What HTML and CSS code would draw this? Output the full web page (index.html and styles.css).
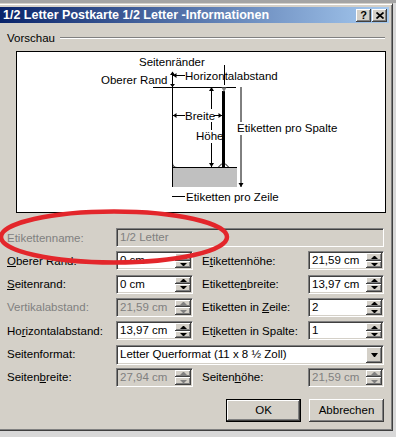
FILE: index.html
```html
<!DOCTYPE html>
<html lang="de">
<head>
  <meta charset="UTF-8">
  <meta name="viewport" content="width=device-width, initial-scale=1.0">
  <title>1/2 Letter Postkarte 1/2 Letter -Informationen</title>
  <link rel="stylesheet" href="styles.css">
</head>
<body>
<div class="screen">
  <div class="dialog">
    <div class="titlebar">
      <span class="title">1/2 Letter Postkarte 1/2 Letter -Informationen</span>
      <span class="tb-btn">?</span>
      <span class="tb-btn tb-close">
        <svg width="8" height="7" viewBox="0 0 8 7"><path d="M0.5 0.5 L7.5 6.5 M7.5 0.5 L0.5 6.5" stroke="#000" stroke-width="1.7" fill="none"/></svg>
      </span>
    </div>

    <div class="content">
      <div class="group"><span>Vorschau</span><span class="etch"></span></div>

      <div class="preview">
        <svg width="368" height="160" viewBox="0 0 368 160">
          <!-- pointers -->
          <line x1="155.5" y1="20" x2="155.5" y2="135" stroke="#000"/>
          <path d="M153 23 L158 23 L155.5 19.5 Z M153 32 L158 32 L155.5 35 Z" fill="#000"/>
          <line x1="156" y1="23.5" x2="168" y2="23.5" stroke="#000"/>
          <path d="M156 23.5 L159.5 21 L159.5 26 Z" fill="#000"/>
          <line x1="136" y1="35.5" x2="219" y2="35.5" stroke="#000"/>
          <line x1="207.5" y1="13" x2="207.5" y2="33" stroke="#000"/>

          <!-- label area -->
          <rect x="156" y="116" width="64" height="19" fill="#c0c0c0"/>
          <line x1="155" y1="115.5" x2="220" y2="115.5" stroke="#000"/>
          <rect x="205" y="39" width="3" height="76" fill="#000"/>
          <path d="M204.5 35.5 L209.5 35.5 L207 40 Z" fill="#808080"/>
          <path d="M201 115.5 L205 111.5 L208 111.5 L212 115.5" stroke="#000" fill="none"/>
          <path d="M155.5 111 Q155.5 115.5 160 115.5" stroke="#000" fill="none"/>

          <!-- Höhe -->
          <line x1="194.5" y1="35" x2="194.5" y2="115" stroke="#000"/>
          <path d="M192 39 L197 39 L194.5 35 Z M192 111 L197 111 L194.5 115 Z" fill="#000"/>

          <!-- Breite -->
          <line x1="156" y1="63.5" x2="168" y2="63.5" stroke="#000"/>
          <line x1="197" y1="63.5" x2="205" y2="63.5" stroke="#000"/>
          <path d="M156 63.5 L159.5 61 L159.5 66 Z M205 63.5 L201.5 61 L201.5 66 Z" fill="#000"/>

          <!-- Etiketten pro Spalte -->
          <line x1="224" y1="35" x2="224" y2="135" stroke="#000"/>
          <path d="M221.5 131 L226.5 131 L224 135 Z" fill="#000"/>

          <!-- Etiketten pro Zeile -->
          <line x1="155" y1="144.5" x2="168" y2="144.5" stroke="#000"/>

          <rect x="168" y="57" width="29" height="13" fill="#fff"/>
          <rect x="178" y="78" width="27" height="13" fill="#fff"/>
          <rect x="219" y="70" width="104" height="13" fill="#fff"/>

          <text x="122" y="14">Seitenränder</text>
          <text x="168" y="27.5">Horizontalabstand</text>
          <line x1="207.5" y1="17" x2="207.5" y2="30" stroke="#000"/>
          <text x="84" y="32">Oberer Rand</text>
          <text x="168" y="67.5">Breite</text>
          <text x="179" y="88">Höhe</text>
          <text x="220" y="80">Etiketten pro Spalte</text>
          <text x="169" y="148.5">Etiketten pro Zeile</text>
        </svg>
      </div>

      <div class="form">
        <label class="lbl off">Etikettenname:</label>
        <div class="field off wide"><span class="val">1/2 Letter</span></div>

        <label class="lbl"><u>O</u>berer Rand:</label>
        <div class="field"><span class="val">0 cm</span><span class="arrows"><span class="up"></span><span class="dn"></span></span></div>
        <label class="lbl lbl2">E<u>t</u>ikettenhöhe:</label>
        <div class="field"><span class="val">21,59 cm</span><span class="arrows"><span class="up"></span><span class="dn"></span></span></div>

        <label class="lbl"><u>S</u>eitenrand:</label>
        <div class="field"><span class="val">0 cm</span><span class="arrows"><span class="up"></span><span class="dn"></span></span></div>
        <label class="lbl lbl2">Etikette<u>n</u>breite:</label>
        <div class="field"><span class="val">13,97 cm</span><span class="arrows"><span class="up"></span><span class="dn"></span></span></div>

        <label class="lbl off">Vertikalabstand:</label>
        <div class="field off"><span class="val">21,59 cm</span><span class="arrows"><span class="up"></span><span class="dn"></span></span></div>
        <label class="lbl lbl2">Etiketten in <u>Z</u>eile:</label>
        <div class="field"><span class="val">2</span><span class="arrows"><span class="up"></span><span class="dn"></span></span></div>

        <label class="lbl">Ho<u>r</u>izontalabstand:</label>
        <div class="field"><span class="val">13,97 cm</span><span class="arrows"><span class="up"></span><span class="dn"></span></span></div>
        <label class="lbl lbl2">Et<u>i</u>ketten in Spalte:</label>
        <div class="field"><span class="val">1</span><span class="arrows"><span class="up"></span><span class="dn"></span></span></div>

        <label class="lbl">Seitenformat:</label>
        <div class="field wide combo"><span class="val">Letter Querformat (11 x 8 ½ Zoll)</span><span class="drop"></span></div>

        <label class="lbl">Seiten<u>b</u>reite:</label>
        <div class="field off"><span class="val">27,94 cm</span><span class="arrows"><span class="up"></span><span class="dn"></span></span></div>
        <label class="lbl lbl2">Seiten<u>h</u>öhe:</label>
        <div class="field off"><span class="val">21,59 cm</span><span class="arrows"><span class="up"></span><span class="dn"></span></span></div>
      </div>

      <div class="buttons">
        <button class="btn default">OK</button>
        <button class="btn">Abbrechen</button>
      </div>
    </div>
  </div>

  <svg class="marker" width="396" height="437" viewBox="0 0 396 437">
    <ellipse cx="114" cy="237" rx="113" ry="25.5" fill="none" stroke="#e3262b" stroke-width="4.5"/>
  </svg>
</div>
</body>
</html>
```

FILE: styles.css
```css
* {
  box-sizing: border-box;
}
body {
  margin: 0;
  background: #d8d8d8;
  font-family: "Liberation Sans", Arial, sans-serif;
  font-size: 11.5px;
  color: #000;
}
.screen {
  position: relative;
  width: 396px;
  height: 437px;
  overflow: hidden;
  padding-top: 3px;
  background: linear-gradient(#a4a4a4 0 3px, #d8d8d8 3px);
}

/* window frame */
.dialog {
  width: 397px;
  height: 428px;
  margin-left: -4px;
  padding: 3px;
  display: flex;
  flex-direction: column;
  background: #d4d0c8;
  border: 1px solid;
  border-color: #d4d0c8 #404040 #404040 #d4d0c8;
  box-shadow: inset 1px 1px #fff, inset -1px -1px #808080;
}
.titlebar {
  height: 16px;
  display: flex;
  align-items: center;
  padding: 0 2px 0 3px;
  background: linear-gradient(to right, #0a246a, #a6caf0);
  color: #fff;
  font-weight: bold;
  font-size: 12.5px;
}
.title {
  flex: 1;
  white-space: nowrap;
}
.tb-btn {
  width: 15px;
  height: 13px;
  display: flex;
  align-items: center;
  justify-content: center;
  background: #d4d0c8;
  color: #000;
  font-size: 11px;
  box-shadow: inset -1px -1px #404040, inset 1px 1px #fff, inset -2px -2px #808080;
}
.tb-close {
  margin-left: 1px;
}

.content {
  display: flex;
  flex-direction: column;
  padding: 0 4px 0 7px;
}
.group {
  display: flex;
  align-items: center;
  margin-top: 8px;
  line-height: 14px;
}
.etch {
  flex: 1;
  margin-left: 5px;
  border-top: 1px solid #808080;
  border-bottom: 1px solid #fff;
}
.preview {
  width: 370px;
  height: 162px;
  margin: 6px 0 0 9px;
  border: 1px solid #000;
  background: #fff;
}
.preview svg {
  display: block;
  font: 11.5px "Liberation Sans", Arial, sans-serif;
}

/* form grid */
.form {
  display: grid;
  grid-template-columns: 109px 77px 115px 76px;
  grid-auto-rows: 19px;
  row-gap: 4.33px;
  margin-top: 15px;
}
.lbl {
  align-self: center;
  white-space: nowrap;
  line-height: 14px;
}
.lbl2 {
  padding-left: 9px;
}
.off {
  color: #808080;
}
.field {
  display: flex;
  height: 19px;
  padding: 1px;
  background: #fff;
  border: 1px solid;
  border-color: #808080 #fff #fff #808080;
  box-shadow: inset 1px 1px #404040, inset -1px -1px #d4d0c8;
}
.field.off {
  background: #d4d0c8;
}
.wide {
  grid-column: span 3;
}
.val {
  flex: 1;
  padding-left: 2px;
  line-height: 15px;
  white-space: nowrap;
  overflow: hidden;
}
.arrows {
  width: 16px;
  display: flex;
  flex-direction: column;
}
.up,
.dn,
.drop {
  flex: 1;
  display: flex;
  align-items: center;
  justify-content: center;
  background: #d4d0c8;
  box-shadow: inset -1px -1px #404040, inset 1px 1px #fff, inset -2px -2px #808080;
}
.up::before,
.dn::before,
.drop::before {
  content: "";
  width: 1px;
  border-left: 3px solid transparent;
  border-right: 3px solid transparent;
}
.up::before {
  border-bottom: 3px solid #000;
}
.dn::before {
  border-top: 3px solid #000;
}
.off .up::before {
  border-bottom-color: #808080;
}
.off .dn::before {
  border-top-color: #808080;
}
.drop {
  flex: 0 0 16px;
}
.drop::before {
  border-top: 4px solid #000;
}
.combo {
  height: 20px;
}

/* buttons */
.buttons {
  display: flex;
  justify-content: flex-end;
  gap: 8px;
  margin: 12px 1px 0 0;
}
.btn {
  width: 75px;
  height: 23px;
  padding: 0;
  border: 0;
  font: inherit;
  color: #000;
  background: #d4d0c8;
  box-shadow: inset -1px -1px #404040, inset 1px 1px #fff, inset -2px -2px #808080;
}
.btn.default {
  border: 1px solid #000;
}

.marker {
  position: absolute;
  left: 0;
  top: 0;
  pointer-events: none;
}
```
